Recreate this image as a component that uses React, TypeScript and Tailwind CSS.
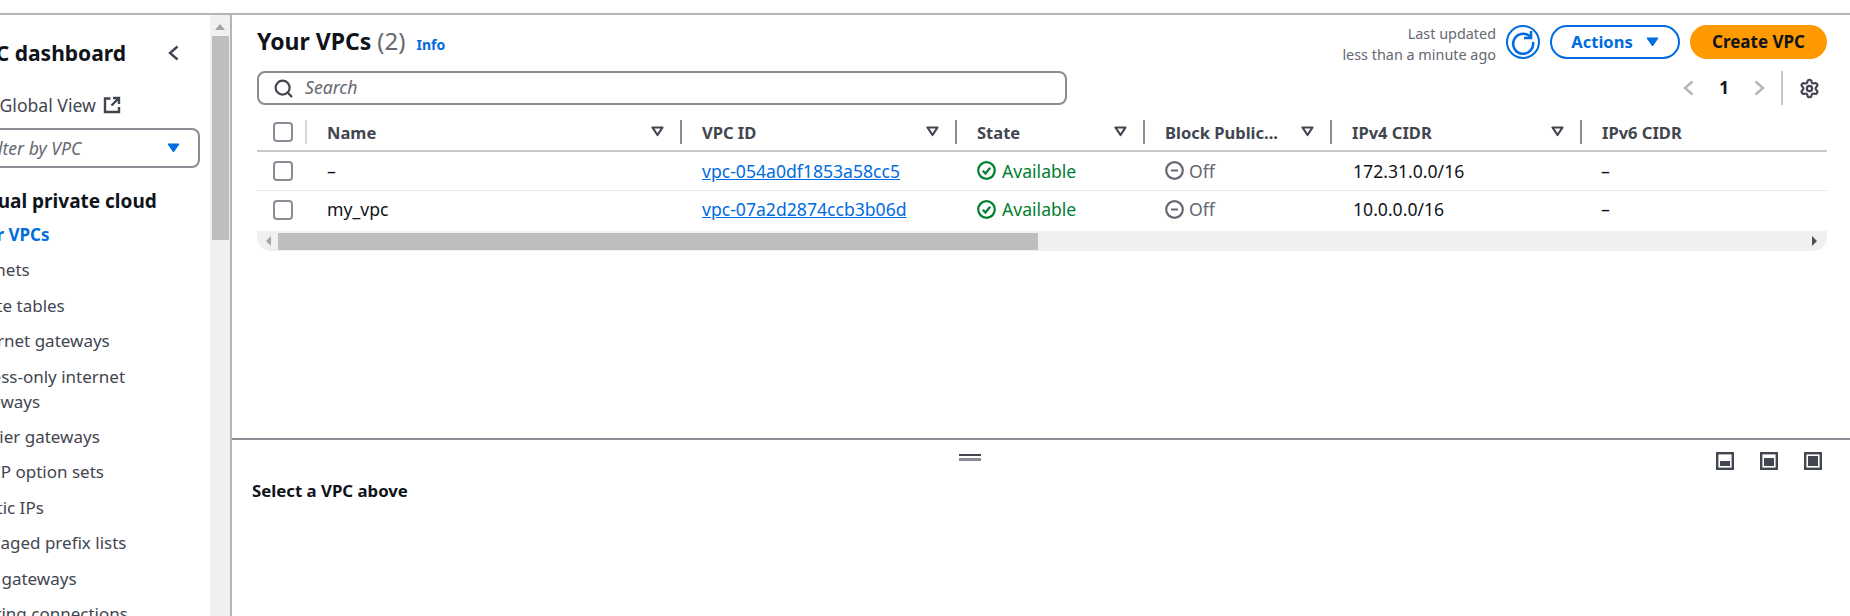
import { Search, Settings } from 'lucide-react'

const NAV = [
  { label: 'Your VPCs', active: true },
  { label: 'Subnets' },
  { label: 'Route tables' },
  { label: 'Internet gateways' },
  { label: 'Egress-only internet gateways' },
  { label: 'Carrier gateways' },
  { label: 'DHCP option sets' },
  { label: 'Elastic IPs' },
  { label: 'Managed prefix lists' },
  { label: 'NAT gateways' },
  { label: 'Peering connections' },
]

const ROWS = [
  { name: '–', id: 'vpc-054a0df1853a58cc5', cidr: '172.31.0.0/16' },
  { name: 'my_vpc', id: 'vpc-07a2d2874ccb3b06d', cidr: '10.0.0.0/16' },
]

function Checkbox() {
  return <div className="w-[20px] h-[20px] rounded-[4px] border-2 border-[#8c8c94] bg-white" />
}

function SortIcon() {
  return (
    <svg width="13" height="11" viewBox="0 0 13 11" fill="none" className="shrink-0">
      <path d="M1.5 1.5h10L6.5 9z" stroke="#424650" strokeWidth="2.2" strokeLinejoin="round" />
    </svg>
  )
}

function Caret({ className }: { className: string }) {
  return (
    <svg width="13" height="10" viewBox="0 0 13 10" className={className}>
      <path d="M1 1h11L6.5 9z" fill="currentColor" stroke="currentColor" strokeLinejoin="round" />
    </svg>
  )
}

function Chevron({ dir, className }: { dir: 'left' | 'right'; className: string }) {
  return (
    <svg width="11" height="16" viewBox="0 0 11 16" fill="none" className={className}>
      <path d={dir === 'left' ? 'M9.5 1.5L2 8l7.5 6.5' : 'M1.5 1.5L9 8l-7.5 6.5'} stroke="currentColor" strokeWidth="2.4" />
    </svg>
  )
}

function HeaderCell({ label, width, sort = true }: { label: string; width: string; sort?: boolean }) {
  return (
    <div className={`${width} shrink-0 flex items-center h-[24px] pl-[20px] pr-[16px] border-r-2 border-[#8c8c94] last:border-r-0`}>
      <span className="text-[16.5px] font-bold text-[#424650] mt-[3px]">{label}</span>
      {sort && <span className="ml-auto"><SortIcon /></span>}
    </div>
  )
}

function SplitIcon({ fill }: { fill: number }) {
  return (
    <svg width="18" height="18" viewBox="0 0 18 18" fill="none">
      <rect x="1.2" y="1.2" width="15.6" height="15.6" stroke="#424650" strokeWidth="2.4" />
      <rect x="4" y={14 - fill} width="10" height={fill} fill="#424650" />
    </svg>
  )
}

export default function App() {
  return (
    <div className="w-[1850px] h-[616px] overflow-hidden bg-white text-[#0f141a] font-['Noto_Sans',sans-serif]">
      <div className="h-[15px] border-b-2 border-[#b4b4bb]" />
      <div className="flex h-[601px]">
        {/* left nav, scrolled off to the left in the screenshot */}
        <aside className="w-[232px] shrink-0 flex border-r-2 border-[#b4b4bb] overflow-hidden">
          <div className="w-[210px] shrink-0 overflow-hidden">
            <div className="flex items-center w-[178px] pt-[24px]">
              <div className="w-[126px] shrink-0 flex justify-end whitespace-nowrap text-[21px] font-bold leading-[28px]">
                VPC dashboard
              </div>
              <Chevron dir="left" className="ml-[42px] shrink-0 text-[#424650]" />
            </div>
            <div className="flex items-center gap-[7px] mt-[26px] ml-[-36px] text-[17.6px] text-[#424650] leading-[24px]">
              <span>EC2 Global View</span>
              <svg width="18" height="18" viewBox="0 0 18 18" fill="none">
                <path d="M7.5 2.5H2v13.5h14V11" stroke="#424650" strokeWidth="2.4" />
                <path d="M10 2h6v6M16 2L8.5 9.5" stroke="#424650" strokeWidth="2.4" />
              </svg>
            </div>
            <div className="flex items-center justify-between mt-[11px] ml-[-22px] w-[222px] h-[40px] border-2 border-[#8c8c94] rounded-[8px] pr-[18px] pl-[5px]">
              <span className="italic text-[17.6px] text-[#656871]">Filter by VPC</span>
              <Caret className="text-[#006ce0]" />
            </div>
            <div className="mt-[21px] ml-[-37px] text-[19px] font-bold leading-[24px] whitespace-nowrap">
              Virtual private cloud
            </div>
            <ul className="mt-[9px] ml-[-35px] w-[185px] text-[17px] leading-[25px] text-[#424650]">
              {NAV.map(n => (
                <li key={n.label} className={`mb-[10.4px] ${n.active ? 'font-bold text-[#006ce0]' : ''}`}>
                  {n.label}
                </li>
              ))}
            </ul>
          </div>
          <div className="flex-1 bg-[#f0f0f0] flex flex-col items-center pt-[9px]">
            <div className="w-0 h-0 border-x-[5px] border-x-transparent border-b-[6px] border-b-[#a3a3a3]" />
            <div className="w-[17px] h-[204px] bg-[#bebebe] mt-[6px]" />
          </div>
        </aside>

        <main className="flex-1 min-w-0 flex flex-col">
          <section className="h-[425px] shrink-0 border-b-2 border-[#8c8c94] pl-[25px] pr-[23px] pt-[7px]">
            <div className="flex items-start justify-between h-[49px]">
              <div className="flex items-baseline gap-[11px] pt-[4px]">
                <h1 className="text-[23px] font-bold leading-[30px]">
                  Your VPCs <span className="font-normal text-[24px] text-[#656871]">(2)</span>
                </h1>
                <a className="text-[14px] font-bold text-[#006ce0]">Info</a>
              </div>
              <div className="flex items-start gap-[10px] pt-[3px]">
                <div className="text-right text-[14.4px] leading-[20.5px] text-[#656871] mt-[-1px]">
                  <div>Last updated</div>
                  <div>less than a minute ago</div>
                </div>
                <svg width="34" height="34" viewBox="0 0 34 34" fill="none" className="shrink-0">
                  <circle cx="17" cy="17" r="16" stroke="#006ce0" strokeWidth="2" />
                  <path d="M24 11.5A10 10 0 1 0 27 17" stroke="#006ce0" strokeWidth="2.6" />
                  <path d="M25 6v7h-7" stroke="#006ce0" strokeWidth="2.6" />
                </svg>
                <button className="w-[130px] h-[34px] rounded-full border-2 border-[#006ce0] flex items-center justify-center gap-[13px] text-[16.5px] font-bold text-[#006ce0]">
                  Actions
                  <Caret className="text-[#006ce0]" />
                </button>
                <button className="w-[137px] h-[34px] rounded-full bg-[#ff9900] text-[17px] font-bold text-[#0f141a]">
                  Create VPC
                </button>
              </div>
            </div>

            <div className="flex items-center justify-between">
              <div className="w-[810px] h-[34px] border-2 border-[#8c8c94] rounded-[8px] flex items-center gap-[11px] pl-[14px]">
                <Search size={21} strokeWidth={2.5} className="text-[#424650]" />
                <span className="italic text-[17.6px] leading-[20px] mt-[-2px] text-[#656871]">Search</span>
              </div>
              <div className="flex items-center text-[#b4b4bb] h-[34px]">
                <Chevron dir="left" className="" />
                <span className="mx-[25px] text-[17px] font-bold text-[#0f141a]">1</span>
                <Chevron dir="right" className="" />
                <div className="w-[2px] h-[34px] bg-[#c6c6cd] ml-[16px] mr-[16px]" />
                <Settings size={21} strokeWidth={2.5} className="text-[#424650] mr-[7px]" />
              </div>
            </div>

            <div className="mt-[8px] rounded-b-[14px] overflow-hidden">
              <div className="flex items-center h-[39px] border-b-2 border-[#c6c6cd]">
                <div className="w-[50px] shrink-0 flex items-center h-[24px] pl-[16px] border-r-2 border-[#d5d5da]">
                  <Checkbox />
                </div>
                <HeaderCell label="Name" width="w-[375px]" />
                <HeaderCell label="VPC ID" width="w-[275px]" />
                <HeaderCell label="State" width="w-[188px]" />
                <HeaderCell label="Block Public..." width="w-[187px]" />
                <HeaderCell label="IPv4 CIDR" width="w-[250px]" />
                <HeaderCell label="IPv6 CIDR" width="w-[245px]" sort={false} />
              </div>
              {ROWS.map((r, i) => (
                <div key={r.id} className={`flex items-center text-[17.6px] ${i === 0 ? 'h-[39px] border-b border-[#e8e8ec]' : 'h-[40px] pb-[3px]'}`}>
                  <div className="w-[50px] shrink-0 pl-[16px]"><Checkbox /></div>
                  <div className="w-[375px] shrink-0 pl-[20px]">{r.name}</div>
                  <a className="w-[275px] shrink-0 pl-[20px] text-[#006ce0] underline">{r.id}</a>
                  <div className="w-[188px] shrink-0 pl-[20px] flex items-center gap-[6px] text-[#00802f]">
                    <svg width="19" height="19" viewBox="0 0 19 19" fill="none" className="shrink-0">
                      <circle cx="9.5" cy="9.5" r="8.3" stroke="#00802f" strokeWidth="2.2" />
                      <path d="M5.8 9.8l2.7 2.7 4.6-5.7" stroke="#00802f" strokeWidth="2.2" />
                    </svg>
                    Available
                  </div>
                  <div className="w-[187px] shrink-0 pl-[20px] flex items-center gap-[5px] text-[#656871]">
                    <svg width="19" height="19" viewBox="0 0 19 19" fill="none" className="shrink-0">
                      <circle cx="9.5" cy="9.5" r="8.3" stroke="#656871" strokeWidth="2.2" />
                      <path d="M6 9.5h7" stroke="#656871" strokeWidth="2.2" />
                    </svg>
                    Off
                  </div>
                  <div className="w-[250px] shrink-0 pl-[21px]">{r.cidr}</div>
                  <div className="w-[245px] shrink-0 pl-[19px]">–</div>
                </div>
              ))}
              {/* horizontal scrollbar */}
              <div className="h-[20px] bg-[#f0f0f0] flex items-center">
                <div className="w-0 h-0 ml-[9px] border-y-[5px] border-y-transparent border-r-[5px] border-r-[#a3a3a3]" />
                <div className="ml-[7px] w-[760px] h-[17px] bg-[#bebebe]" />
                <div className="w-0 h-0 ml-auto mr-[10px] border-y-[5px] border-y-transparent border-l-[5px] border-l-[#505050]" />
              </div>
            </div>
          </section>

          <section className="flex-1 relative pl-[20px]">
            <div className="absolute left-[727px] top-[14px] w-[22px]">
              <div className="h-[2px] bg-[#424650]" />
              <div className="h-[3px] mt-[2px] bg-[#8c8c94]" />
            </div>
            <div className="flex justify-end gap-[26px] pr-[28px] pt-[12px]">
              <SplitIcon fill={5} />
              <SplitIcon fill={8} />
              <SplitIcon fill={10} />
            </div>
            <div className="mt-[9px] text-[16.8px] leading-[24px] font-bold text-[#0f141a]">Select a VPC above</div>
          </section>
        </main>
      </div>
    </div>
  )
}
